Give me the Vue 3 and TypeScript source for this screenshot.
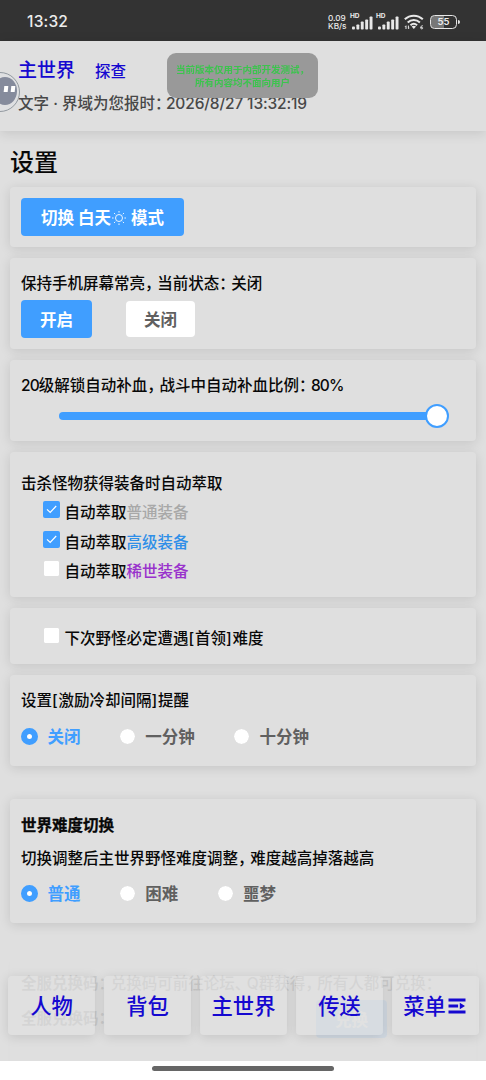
<script setup lang="ts">
import { computed, ref } from 'vue'

interface Loot { name: string; tone: string; checked: boolean }

const keepAwake = ref(false)
const heal = ref(80)
const loot = ref<Loot[]>([
  { name: '普通装备', tone: 'grey', checked: true },
  { name: '高级装备', tone: 'blue', checked: true },
  { name: '稀世装备', tone: 'purple', checked: false },
])
const meetBoss = ref(false)
const reminders = ['关闭', '一分钟', '十分钟']
const reminder = ref('关闭')
const levels = ['普通', '困难', '噩梦']
const level = ref('普通')
const tabs = ['人物', '背包', '主世界', '传送', '菜单']
const bars = [3, 5, 8, 10, 13]
const state = computed(() => (keepAwake.value ? '开启' : '关闭'))
</script>

<template>
  <div class="screen">
    <div class="status">
      <span class="clock">13:32</span>
      <div class="indicators">
        <div class="speed"><span>0.09</span><span>KB/s</span></div>
        <div v-for="n in 2" :key="n" class="signal">
          <span class="hd">HD</span>
          <svg width="21" height="14" viewBox="0 0 21 14">
            <rect v-for="(h, i) in bars" :key="i" :x="i * 4.4" :y="13.5 - h" width="2.9" :height="h" rx="0.8" fill="#e8e8e8" />
          </svg>
        </div>
        <svg class="wifi" width="20" height="16" viewBox="0 0 20 16" fill="none" stroke="#e8e8e8" stroke-width="2">
          <path d="M0.8 5.3a13 13 0 0 1 18 0" />
          <path d="M3.7 8.4a9 9 0 0 1 12.2 0" />
          <path d="M6.5 11.2a5 5 0 0 1 6.6 0" />
          <path d="M7.6 12.6L9.8 15l2.2-2.4q-2.2-1.6-4.4 0z" fill="#e8e8e8" stroke="none" />
          <path d="M2 15v-3.2M1 12.8l1-1M4.4 11.6v3M5.4 13.8l-1 1" stroke-width="1" />
          <path d="M18.8 11.6q-2.3.2-2.2 2.2.2 1.2 1.2 1.1 1-.1 1-1-.2-1-2.2-.3" stroke-width="0.9" />
        </svg>
        <div class="battery"><span class="cell">55</span><i></i></div>
      </div>
    </div>

    <header class="head">
      <div class="links"><a class="world">主世界</a><a class="scout">探查</a></div>
      <p class="time">文字 · 界域为您报时<s>：</s><span class="digits">2026/8/27 13:32:19</span></p>
    </header>

    <main>
      <h1>设置</h1>

      <section class="card mode">
        <button class="btn primary">切换 白天<svg width="16" height="16" viewBox="0 0 16 16" fill="none" stroke="#fff" stroke-width="0.9"><circle cx="8" cy="8" r="3.5" /><path d="M8 1v1.6M8 13.4V15M1 8h1.6M13.4 8H15M3 3l1.2 1.2M11.8 11.8L13 13M13 3l-1.2 1.2M4.2 11.8L3 13" /></svg> 模式</button>
      </section>

      <section class="card awake">
        <p>保持手机屏幕常亮<s>，</s>当前状态<s>：</s>{{ state }}</p>
        <div class="buttons">
          <button class="btn primary" @click="keepAwake = true">开启</button>
          <button class="btn plain" @click="keepAwake = false">关闭</button>
        </div>
      </section>

      <section class="card heal">
        <p><span class="num">20</span>级解锁自动补血<s>，</s>战斗中自动补血比例<s>：</s><span class="num">{{ heal }}%</span></p>
        <div class="slider"><i></i></div>
      </section>

      <section class="card loot">
        <p>击杀怪物获得装备时自动萃取</p>
        <label v-for="item in loot" :key="item.name" class="check" @click="item.checked = !item.checked">
          <span class="box" :class="{ on: item.checked }">
            <svg v-if="item.checked" width="17" height="17" viewBox="0 0 17 17" fill="none" stroke="#fff" stroke-width="1.2"><path d="M4 8.3l3.2 3.2L13.2 5" /></svg>
          </span>
          <span>自动萃取<em :class="item.tone">{{ item.name }}</em></span>
        </label>
      </section>

      <section class="card boss">
        <label class="check" @click="meetBoss = !meetBoss">
          <span class="box" :class="{ on: meetBoss }"></span>
          <span>下次野怪必定遭遇<b>[</b>首领<b>]</b>难度</span>
        </label>
      </section>

      <section class="card remind">
        <p>设置<b>[</b>激励冷却间隔<b>]</b>提醒</p>
        <div class="radios">
          <label v-for="r in reminders" :key="r" class="radio" :class="{ on: reminder === r }" @click="reminder = r"><i></i><span>{{ r }}</span></label>
        </div>
      </section>

      <section class="card level">
        <h2>世界难度切换</h2>
        <p>切换调整后主世界野怪难度调整<s>，</s>难度越高掉落越高</p>
        <div class="radios">
          <label v-for="l in levels" :key="l" class="radio" :class="{ on: level === l }" @click="level = l"><i></i><span>{{ l }}</span></label>
        </div>
      </section>

      <section class="card redeem">
        <p><strong>全服兑换码</strong><s>：</s>兑换码可前往论坛<s>、</s>Q群获得<s>，</s>所有人都可兑换<s>：</s></p>
        <div class="code"><strong>全服兑换码<s>：</s></strong><button class="btn primary">兑换</button></div>
      </section>
    </main>

    <nav class="tabs">
      <a v-for="tab in tabs" :key="tab" class="tab">{{ tab }}<svg v-if="tab === '菜单'" width="21" height="18" viewBox="0 0 21 18" fill="#1508d0"><path d="M2.5 1.4h17v3.2h-17zM2.5 7.4h9.6v3.2H2.5zM2.5 13.4h17v3.2h-17zM13.8 5.8L19 9l-5.2 3.2z" /></svg></a>
    </nav>
    <footer class="home"><i></i></footer>

    <div class="toast"><span>当前版本仅用于内部开发测试，</span><span>所有内容均不面向用户</span></div>
    <div class="float"><div><i></i><i></i></div></div>
  </div>
</template>

<style>
html, body { margin: 0; background: #dfdfdf; overflow: hidden; }
</style>

<style scoped>
* { box-sizing: border-box; }
.screen {
  position: relative; width: 486px; height: 1080px; overflow: hidden; background: #dfdfdf; color: #080808;
  font: 500 15.5px/20px Inter, "Noto Sans CJK SC", sans-serif;
}
p, h1, h2 { margin: 0; white-space: nowrap; }
p { height: 20px; }
s { text-decoration: none; letter-spacing: -3.4px; }
b { font-weight: 500; letter-spacing: .8px; }
em { font-style: normal; }
.num { letter-spacing: -.9px; }

.status { height: 41px; background: #333; color: #ececec; display: flex; justify-content: space-between; padding: 3px 26px 0 27px; align-items: center; }
.clock { font-size: 15.5px; letter-spacing: .2px; }
.indicators { display: flex; align-items: center; }
.speed { display: flex; flex-direction: column; font-size: 8.2px; line-height: 8px; width: 23px; }
.signal { position: relative; width: 26px; height: 16px; padding: 2px 0 0 1px; }
.signal svg { display: block; }
.hd { position: absolute; left: -1px; top: -1px; font-size: 6.5px; line-height: 7px; font-weight: 700; }
.wifi { margin-left: 1px; }
.battery { display: flex; align-items: center; margin-left: 6px; }
.cell { width: 27px; height: 14px; border: 1.5px solid #e8e8e8; border-radius: 4.5px; background: linear-gradient(90deg, #777 0 50%, #333 50%); background-clip: padding-box; font-size: 9.5px; line-height: 11px; text-align: center; font-weight: 600; }
.battery i { width: 2px; height: 4px; margin-left: 1px; border-radius: 0 2px 2px 0; background: #e8e8e8; }

.head { height: 90px; padding: 15px 18px 0; box-shadow: 0 2px 12px rgba(0,0,0,.12); }
.links { display: flex; align-items: center; gap: 20px; height: 28px; color: #1508d0; }
.world { font-size: 19px; padding-top: 1px; }
.scout { font-size: 15.5px; padding-top: 4px; }
.time { margin-top: 10px; color: #484848; display: flex; }
.time s { width: 11px; }
.digits { white-space: pre; letter-spacing: -.15px; }

h1 { margin: 17px 0 10px 10px; height: 29px; font-size: 24px; line-height: 29px; font-weight: 500; }
.card { margin: 0 10px 11px; padding: 0 11px; border-radius: 4px; box-shadow: 0 2px 12px rgba(0,0,0,.12); background: #dfdfdf; display: flex; flex-direction: column; align-items: flex-start; }
.btn { font: 700 16.5px/20px Inter, "Noto Sans CJK SC", sans-serif; border: 0; padding: 2px 19px 0; height: 38px; border-radius: 4px; white-space: nowrap; display: flex; align-items: center; }
.primary { background: #409eff; color: #fff; }
.plain { background: #fff; color: #606060; height: 36px; padding: 2px 18px 0; }
.mode { height: 60px; padding-top: 11px; }
.mode .btn { white-space: pre; width: 163px; justify-content: center; padding: 2px 0 0; }
.awake { height: 91px; padding-top: 16px; }
.buttons { display: flex; gap: 34px; align-items: center; margin-top: 6px; }
.heal { height: 81px; padding-top: 16px; }
.slider { margin: 16px 0 0 37.5px; width: 378.5px; height: 8px; border-radius: 4px; background: #409eff; display: flex; align-items: center; justify-content: flex-end; }
.slider i { flex: none; width: 24px; height: 24px; border-radius: 50%; border: 2px solid #409eff; background: #fff; margin-right: -12px; }
.loot { height: 145px; padding-top: 22px; }
.loot p { margin-bottom: 4px; }
.check { display: flex; gap: 5px; padding-left: 21.5px; height: 29.4px; align-items: center; white-space: nowrap; padding-top: 1px; }
.box { width: 17px; height: 17px; margin-top: -7px; border: 1px solid #dfdfdf; border-radius: 2px; background: #fff; background-clip: padding-box; }
.box.on { border: 0; background: #409eff; }
.box svg { display: block; }
.grey { color: #a8a8a8; }
.blue { color: #2f8fe8; }
.purple { color: #9932cc; }
.boss { height: 56px; padding-top: 16px; }
.remind { height: 91px; padding-top: 16px; margin-bottom: 33px; }
.radios { display: flex; gap: 38.3px; }
.radio { display: flex; align-items: center; gap: 9.5px; color: #606060; font-size: 16.5px; font-weight: 700; }
.radio span { padding-top: 1px; margin-bottom: -1px; }
.radio i { width: 17px; height: 17px; border-radius: 50%; border: 1px solid #dfdfdf; background: #fff; background-clip: padding-box; }
.radio.on { color: #409eff; }
.radio.on i { border: 6px solid #409eff; }
.remind .radios { margin-top: 15px; }
.level { height: 124px; padding-top: 17px; margin-bottom: 33px; }
h2 { font-size: 15.5px; line-height: 20px; font-weight: 700; margin-bottom: 13px; -webkit-text-stroke: .3px; }
.level .radios { margin-top: 14px; }
.redeem { height: 140px; padding-top: 18px; }
.code { display: flex; align-items: center; margin-top: 6px; }
.code strong { width: 295px; }

.tabs { position: absolute; left: 0; right: 0; top: 945px; height: 116px; padding: 31px 7px 0 8px; display: flex; gap: 9px; background: rgba(223,223,223,.91); }
.tab { flex: 1; height: 59px; display: flex; align-items: center; justify-content: center; border-radius: 4px; background: rgba(226,226,226,.4); box-shadow: 0 2px 12px rgba(0,0,0,.12); font-size: 21.3px; color: #1508d0; white-space: nowrap; }
.tab svg { margin: 0 1px 0 0; }
.home { position: absolute; left: 0; right: 0; bottom: 0; height: 19px; background: #fff; display: flex; justify-content: center; }
.home i { width: 182px; height: 5px; border-radius: 3px; background: #666; margin-top: 5px; }
.toast { position: absolute; left: 167px; top: 53px; width: 151px; height: 45px; border-radius: 9px; background: #999; color: #3cc44e; font-size: 9.5px; line-height: 12.5px; font-weight: 700; display: flex; flex-direction: column; align-items: center; justify-content: center; padding-top: 2px; white-space: nowrap; }
.toast span { filter: blur(.7px); }
.float { position: absolute; left: -20px; top: 72px; width: 40px; height: 40px; border-radius: 50%; border: 1.5px solid #9299a0; background: #dfe0e2; padding: 4px; }
.float div { position: relative; left: 8px; width: 24px; height: 28px; border-radius: 50%; background: #858b9c; display: flex; gap: 3.5px; padding: 9px 0 0 10.5px; }
.float i { width: 3.5px; height: 6px; background: #fff; transform: skewX(-6deg); }
</style>
